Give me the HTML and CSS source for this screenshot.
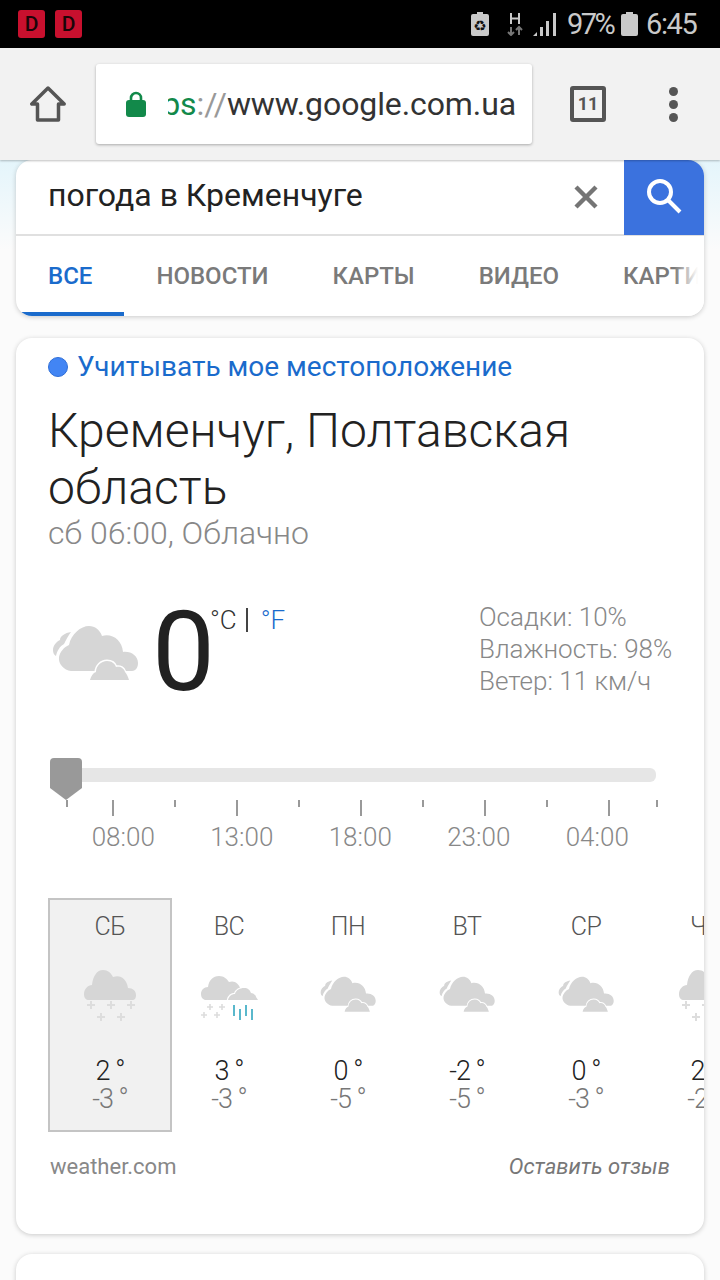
FILE: index.html
```html
<!DOCTYPE html>
<html lang="en">
<head>
	<meta charset="UTF-8">
	<title>погода в Кременчуге</title>
	<link rel="stylesheet" href="styles.css">
</head>
<body>
	<svg class="defs" width="0" height="0">
		<symbol id="cloudy" viewBox="0 0 88 60">
			<path fill="#d6d6d6" d="M19 7C13 8 8 11 8 15 4 17 1 21 1 25 1 28 2 30 4 31 5 26 8 21 12 19 14 15 16 11 19 7Z"/>
			<path fill="#d6d6d6" d="M19 46C12 45 6 39 7 32 8 27 12 22 17 20 19 9 29 1 37 1 43 1 48 5 50 11 60 8 70 15 71 27 79 26 86 31 86 38 86 42 84 46 80 46Z"/>
			<path fill="#d6d6d6" stroke="#fff" stroke-width="3" paint-order="stroke" d="M38 55C39 51 41 48 44 47 44 41 49 36 55 36 60 36 63 39 64 42 68 41 72 43 73 47 75 49 76 52 77 55Z"/>
		</symbol>
		<symbol id="snow" viewBox="0 0 52 52">
			<path fill="#d6d6d6" d="M5 30C2 30 0 28 0 24 0 19 4 15 8 15 9 6 13 0 19 0 24 0 27 3 29 7 36 4 43 9 44 18 49 18 52 21 52 25 52 28 51 30 48 30Z"/>
			<path stroke="#ddd" stroke-width="2" d="M3 35H11M7 31V39M23 35H31M27 31V39M43 35H51M47 31V39M13 47H21M17 43V51M33 47H41M37 43V51"/>
		</symbol>
		<symbol id="mixed" viewBox="0 0 57 44">
			<path fill="#d6d6d6" d="M4 24C1 23 0 21 0 18 0 14 3 11 7 11 8 4 12 0 18 0 23 0 26 3 28 6 33 4 38 7 40 14L34 24Z"/>
			<path fill="#d6d6d6" stroke="#fff" stroke-width="2.5" paint-order="stroke" d="M27 24C28 20 31 18 34 18 35 14 39 12 43 12 47 12 49 14 50 17 53 17 55 20 55 21L57 24Z"/>
			<path stroke="#ddd" stroke-width="1.6" d="M6 31H12M9 28V34M18 31H24M21 28V34M0 39H6M3 36V42M13 39H19M16 36V42"/>
			<path stroke="#5ab8cc" stroke-width="2" d="M33 29V40M39 33V44M45 29V40M51 33V44"/>
		</symbol>
	</svg>

	<div class="status">
		<span class="note">D</span>
		<span class="note">D</span>
		<svg class="st-batt" width="18" height="24" viewBox="0 0 18 24">
			<path fill="#c9c9c9" d="M6 0H12V2H16Q18 2 18 4V22Q18 24 16 24H2Q0 24 0 22V4Q0 2 2 2H6Z"/>
			<text class="st-rec" x="9" y="19" text-anchor="middle">♻</text>
		</svg>
		<svg class="st-net" width="16" height="24" viewBox="0 0 16 24">
			<path stroke="#c9c9c9" stroke-width="2" fill="none" d="M4 1V12M12 1V12M4 6.5H12"/>
			<path stroke="#777" stroke-width="2" fill="none" d="M4 15V23M1 20 4 23 7 20M12 23V15M9 18 12 15 15 18"/>
		</svg>
		<svg class="st-sig" width="25" height="24" viewBox="0 0 25 24">
			<path fill="#c9c9c9" d="M0 24 4 20V24ZM7 15H10V24H7ZM13 9H16V24H13ZM20 1H23V24H20Z"/>
		</svg>
		<span class="st-txt st-pct">97%</span>
		<svg class="st-full" width="17" height="24" viewBox="0 0 17 24">
			<path fill="#c9c9c9" d="M5 0H12V2H15Q17 2 17 4V22Q17 24 15 24H2Q0 24 0 22V4Q0 2 2 2H5Z"/>
		</svg>
		<span class="st-txt st-time">6:45</span>
	</div>

	<div class="toolbar">
		<svg class="tb-home" width="36" height="36" viewBox="0 0 36 36">
			<path fill="none" stroke="#555" stroke-width="3.5" stroke-linejoin="round" d="M18 2 1.8 18H7.5V34H28.5V18H34.2Z"/>
		</svg>
		<div class="url">
			<svg class="lock" width="20" height="26" viewBox="0 0 20 26">
				<path fill="none" stroke="#12894a" stroke-width="2.6" d="M5 11V7A5 5 0 0 1 15 7V11"/>
				<rect y="9" width="20" height="17" rx="3" fill="#12894a"/>
			</svg>
			<div class="url-clip">
				<div class="url-txt"><span class="u-https">https</span><span class="u-sep">://</span>www.google.com.ua</div>
			</div>
		</div>
		<div class="tabcount">11</div>
		<div class="menu"><i></i><i></i><i></i></div>
	</div>

	<div class="page">
		<div class="card search">
			<div class="s-row">
				<div class="s-text">погода в Кременчуге</div>
				<svg class="s-clear" width="24" height="24" viewBox="0 0 24 24">
					<path stroke="#757575" stroke-width="4.4" d="M2 2 22 22M22 2 2 22"/>
				</svg>
				<div class="s-btn">
					<svg width="38" height="38" viewBox="0 0 38 38">
						<circle cx="15" cy="14" r="11" fill="none" stroke="#fff" stroke-width="4"/>
						<path stroke="#fff" stroke-width="4" d="M23 22 35 34"/>
					</svg>
				</div>
			</div>
			<div class="tabs">
				<span class="tab on">Все</span>
				<span class="tab">Новости</span>
				<span class="tab">Карты</span>
				<span class="tab">Видео</span>
				<span class="tab">Картинки</span>
			</div>
		</div>

		<div class="card weather">
			<div class="loc"><i class="dot"></i>Учитывать мое местоположение</div>
			<div class="city">Кременчуг, Полтавская область</div>
			<div class="sub">сб 06:00, Облачно</div>

			<div class="now">
				<svg class="now-ic" width="88" height="60"><use href="#cloudy"/></svg>
				<div class="now-t">0</div>
				<div class="now-u">°C<i class="bar"></i><span class="blue">°F</span></div>
				<div class="now-info">
					<div>Осадки: 10%</div>
					<div>Влажность: 98%</div>
					<div>Ветер: 11 км/ч</div>
				</div>
			</div>

			<div class="slider">
				<svg class="thumb" width="32" height="42" viewBox="0 0 32 42">
					<path fill="#999" d="M4 0H28Q32 0 32 4V30L16 42 0 30V4Q0 0 4 0Z"/>
				</svg>
				<div class="track"></div>
				<svg class="ticks" width="624" height="16" viewBox="0 0 624 16">
					<path stroke="#999" stroke-width="2" d="M19 0V7M65 0V16M127 0V7M189 0V16M251 0V7M313 0V16M375 0V7M437 0V16M499 0V7M561 0V16M609 0V7"/>
				</svg>
				<div class="hours">
					<span>08:00</span><span>13:00</span><span>18:00</span><span>23:00</span><span>04:00</span>
				</div>
			</div>

			<div class="days">
				<div class="day on">
					<div class="d-name">СБ</div>
					<div class="d-ic"><svg class="ic-snow" width="52" height="52"><use href="#snow"/></svg></div>
					<div class="d-hi">2 °</div>
					<div class="d-lo">-3 °</div>
				</div>
				<div class="day">
					<div class="d-name">ВС</div>
					<div class="d-ic"><svg class="ic-mixed" width="57" height="44"><use href="#mixed"/></svg></div>
					<div class="d-hi">3 °</div>
					<div class="d-lo">-3 °</div>
				</div>
				<div class="day">
					<div class="d-name">ПН</div>
					<div class="d-ic"><svg class="ic-cloudy" width="57" height="39"><use href="#cloudy"/></svg></div>
					<div class="d-hi">0 °</div>
					<div class="d-lo">-5 °</div>
				</div>
				<div class="day">
					<div class="d-name">ВТ</div>
					<div class="d-ic"><svg class="ic-cloudy" width="57" height="39"><use href="#cloudy"/></svg></div>
					<div class="d-hi">-2 °</div>
					<div class="d-lo">-5 °</div>
				</div>
				<div class="day">
					<div class="d-name">СР</div>
					<div class="d-ic"><svg class="ic-cloudy" width="57" height="39"><use href="#cloudy"/></svg></div>
					<div class="d-hi">0 °</div>
					<div class="d-lo">-3 °</div>
				</div>
				<div class="day">
					<div class="d-name">ЧТ</div>
					<div class="d-ic"><svg class="ic-snow" width="52" height="52"><use href="#snow"/></svg></div>
					<div class="d-hi">2 °</div>
					<div class="d-lo">-2 °</div>
				</div>
			</div>

			<div class="foot">
				<span>weather.com</span>
				<em>Оставить отзыв</em>
			</div>
		</div>

		<div class="card next"></div>
	</div>
</body>
</html>
```

FILE: styles.css
```css
*{
	margin:0;
	padding:0;
	box-sizing:border-box;
}
html,body{
	width:720px;
	height:1280px;
	overflow:hidden;
}
body{
	font-family:Roboto,"Noto Sans",sans-serif;
	background-color:#fbfbfb;
}
.defs{
	display:block;
	height:0;
}
svg{
	display:block;
	flex:none;
}

/* status bar */
.status{
	display:flex;
	align-items:center;
	height:48px;
	padding:0 23px 0 18px;
	background-color:#000;
}
.note{
	width:27px;
	height:28px;
	margin-right:10px;
	font-size:21px;
	font-weight:500;
	line-height:28px;
	text-align:center;
	color:#1a0508;
	background-color:#c8102e;
	border-radius:3px;
}
.st-batt{
	margin-left:auto;
}
.st-rec{
	font-family:"DejaVu Sans",sans-serif;
	font-size:15px;
	fill:#111;
}
.st-net{
	margin-left:18px;
}
.st-sig{
	margin-left:10px;
}
.st-full{
	margin-left:6px;
}
.st-txt{
	font-size:29px;
	line-height:48px;
	color:#c9c9c9;
}
.st-pct{
	width:48px;
	margin-left:9px;
	letter-spacing:-2.6px;
}
.st-time{
	width:51px;
	margin-left:8px;
	letter-spacing:-1.4px;
}

/* browser toolbar */
.toolbar{
	position:relative;
	z-index:2;
	display:flex;
	align-items:center;
	height:112px;
	padding-left:30px;
	background-color:#f2f2f2;
	box-shadow:0 1px 2px rgba(0,0,0,.25);
}
.url{
	display:flex;
	align-items:center;
	width:436px;
	height:80px;
	margin-left:30px;
	padding:0 16px 0 30px;
	background-color:#fff;
	border-radius:3px;
	box-shadow:0 1px 3px rgba(0,0,0,.3);
}
.lock{
	margin-right:22px;
}
.url-clip{
	display:flex;
	justify-content:flex-end;
	flex:1;
	overflow:hidden;
}
.url-txt{
	flex:none;
	font-size:32px;
	line-height:44px;
	letter-spacing:-.1px;
	color:#333;
	white-space:nowrap;
}
.u-https{
	color:#12894a;
}
.u-sep{
	color:#999;
}
.tabcount{
	width:36px;
	height:36px;
	margin-left:38px;
	font-size:18px;
	font-weight:700;
	line-height:28px;
	text-align:center;
	color:#555;
	border:4px solid #555;
	border-radius:3px;
}
.menu{
	display:flex;
	flex-direction:column;
	gap:4px;
	margin-left:63px;
}
.menu i{
	display:block;
	width:9px;
	height:9px;
	background-color:#555;
	border-radius:50%;
}

/* page */
.page{
	height:1120px;
	padding:0 16px;
	background:linear-gradient(#e4f5fb,#fbfbfb 90px);
}
.card{
	background-color:#fff;
	border-radius:16px;
	box-shadow:0 1px 5px rgba(0,0,0,.2);
}

/* search box */
.search{
	overflow:hidden;
}
.s-row{
	display:flex;
	align-items:center;
	height:76px;
	border-bottom:2px solid #e0e0e0;
}
.s-text{
	flex:1;
	padding:0 0 4px 32px;
	font-size:32px;
	color:#222;
}
.s-clear{
	margin-right:26px;
}
.s-btn{
	display:flex;
	align-items:center;
	justify-content:center;
	width:80px;
	height:76px;
	background-color:#3b72de;
}
.tabs{
	position:relative;
	display:flex;
	height:80px;
	overflow:hidden;
}
.tabs:after{
	content:"";
	position:absolute;
	top:0;
	right:0;
	width:30px;
	height:100%;
	background:linear-gradient(to right,rgba(255,255,255,0),#fff 80%);
}
.tab{
	flex:none;
	padding:0 32px;
	font-size:24px;
	font-weight:500;
	line-height:81px;
	text-transform:uppercase;
	color:#7a7a7a;
}
.tab.on{
	color:#1a6bcc;
	border-bottom:4px solid #1a6bcc;
}

/* weather */
.weather{
	height:896px;
	margin-top:22px;
	padding:14px 0 0 32px;
}
.loc{
	display:flex;
	align-items:center;
	font-size:28px;
	line-height:30px;
	color:#1a6bcc;
}
.dot{
	width:20px;
	height:20px;
	margin-right:9px;
	background-color:#4285f4;
	border:1px solid #2f6fd8;
	border-radius:50%;
}
.city{
	width:600px;
	margin-top:20px;
	font-size:48px;
	font-weight:300;
	line-height:57px;
	color:#222;
}
.sub{
	margin-top:-1px;
	font-size:32px;
	font-weight:300;
	line-height:36px;
	color:#888;
}
.now{
	display:flex;
	align-items:flex-start;
	height:112px;
	margin-top:45px;
}
.now-ic{
	margin:29px 0 0 4px;
}
.now-t{
	margin-left:12px;
	font-size:112px;
	line-height:112px;
	letter-spacing:-5px;
	color:#212121;
}
.now-u{
	display:flex;
	margin-top:9px;
	font-size:26px;
	font-weight:300;
	line-height:30px;
	color:#333;
}
.bar{
	width:2px;
	height:24px;
	margin:3px 13px 0 9px;
	background-color:#444;
}
.blue{
	color:#1a6bcc;
}
.now-info{
	margin:5px 0 0 auto;
	width:225px;
	font-size:26px;
	font-weight:300;
	line-height:32px;
	color:#888;
}
.slider{
	position:relative;
	margin-top:60px;
}
.thumb{
	position:absolute;
	top:-10px;
	left:2px;
}
.track{
	width:606px;
	height:14px;
	margin-left:2px;
	background-color:#e6e6e6;
	border-radius:6px;
}
.ticks{
	margin-top:18px;
}
.hours{
	display:flex;
	margin-top:6px;
	padding-left:16px;
	font-size:26px;
	font-weight:300;
	line-height:30px;
	color:#888;
}
.hours span{
	flex:0 0 118.5px;
	text-align:center;
}

/* days */
.days{
	display:flex;
	margin-top:46px;
	overflow:hidden;
}
.day{
	flex:0 0 124px;
	height:234px;
	margin-right:-5px;
	padding-top:12px;
	text-align:center;
	border:2px solid transparent;
}
.day.on{
	background-color:#f1f1f1;
	border-color:#c4c4c4;
}
.d-name{
	font-size:25px;
	font-weight:300;
	line-height:30px;
	letter-spacing:-.5px;
	color:#555;
}
.d-ic{
	display:flex;
	justify-content:center;
	height:56px;
	margin-top:28px;
}
.ic-mixed,.ic-cloudy{
	margin-top:6px;
}
.d-hi{
	margin-top:31px;
	font-size:27px;
	font-weight:300;
	line-height:28px;
	letter-spacing:-1px;
	color:#222;
}
.d-lo{
	font-size:27px;
	font-weight:300;
	line-height:29px;
	letter-spacing:-1px;
	color:#777;
}
.foot{
	display:flex;
	justify-content:space-between;
	margin-top:20px;
	padding:0 34px 0 2px;
	font-size:22px;
	line-height:30px;
	color:#888;
}
.foot em{
	color:#777;
}
.next{
	height:60px;
	margin-top:20px;
}
```
